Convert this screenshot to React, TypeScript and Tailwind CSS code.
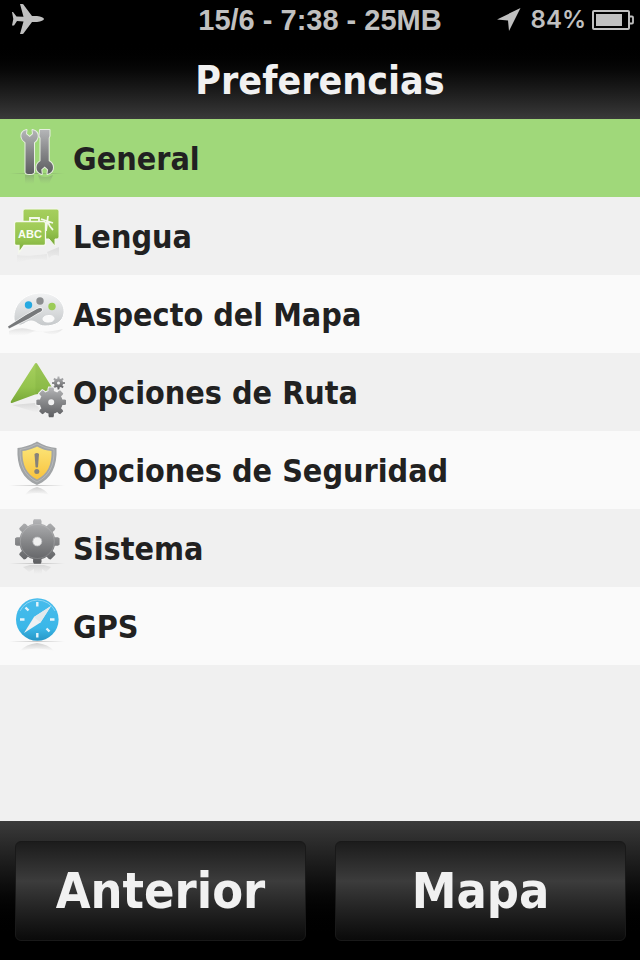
import type { ReactNode } from "react";

function gearPath(cx: number, cy: number, outer: number, inner: number, teeth: number) {
  const points: string[] = [];
  const step = (Math.PI * 2) / teeth;
  const at = (r: number, a: number) =>
    `${(cx + r * Math.cos(a)).toFixed(2)} ${(cy + r * Math.sin(a)).toFixed(2)}`;
  for (let i = 0; i < teeth; i++) {
    const a = i * step - Math.PI / 2;
    points.push(at(inner, a - step * 0.3));
    points.push(at(outer - 1.5, a - step * 0.26));
    points.push(at(outer, a - step * 0.19));
    points.push(at(outer, a + step * 0.19));
    points.push(at(outer - 1.5, a + step * 0.26));
    points.push(at(inner, a + step * 0.3));
    points.push(at(inner, a + step * 0.5));
  }
  return `M${points.join("L")}Z`;
}

function IconFrame({ children }: { children: ReactNode }) {
  return (
    <svg aria-hidden="true" viewBox="0 0 73 78" className="h-[78px] w-[73px] shrink-0">
      {children}
    </svg>
  );
}

function SharedDefs() {
  return (
    <svg aria-hidden="true" className="absolute h-0 w-0">
      <defs>
        <linearGradient id="steel" x1="0" y1="0" x2="0" y2="1">
          <stop offset="0" stopColor="#b4b5b7" />
          <stop offset="0.5" stopColor="#868789" />
          <stop offset="1" stopColor="#5d5e61" />
        </linearGradient>
        <linearGradient id="leaf" x1="0" y1="0" x2="0" y2="1">
          <stop offset="0" stopColor="#a6cf5e" />
          <stop offset="0.6" stopColor="#94c34d" />
          <stop offset="1" stopColor="#76a636" />
        </linearGradient>
        <linearGradient id="pale" x1="0" y1="0" x2="0" y2="1">
          <stop offset="0" stopColor="#f2f3f4" />
          <stop offset="1" stopColor="#c6c9cb" />
        </linearGradient>
        <linearGradient id="gold" x1="0" y1="0" x2="0" y2="1">
          <stop offset="0" stopColor="#fbe477" />
          <stop offset="1" stopColor="#f9c33d" />
        </linearGradient>
        <linearGradient id="sky" x1="0" y1="0" x2="0" y2="1">
          <stop offset="0" stopColor="#47bcec" />
          <stop offset="0.7" stopColor="#3bb7e8" />
          <stop offset="1" stopColor="#2796c6" />
        </linearGradient>
        <linearGradient id="fade" x1="0" y1="0" x2="0" y2="1">
          <stop offset="0" stopColor="#606060" stopOpacity="0.28" />
          <stop offset="1" stopColor="#808080" stopOpacity="0" />
        </linearGradient>
        <radialGradient id="ground">
          <stop offset="0" stopColor="#505050" stopOpacity="0.3" />
          <stop offset="1" stopColor="#505050" stopOpacity="0" />
        </radialGradient>
      </defs>
    </svg>
  );
}

function Ground() {
  return <ellipse cx="37" cy="54.5" rx="29" ry="0.8" fill="url(#ground)" />;
}

function ToolsIcon() {
  return (
    <IconFrame>
      <Ground />
      <path d="M25 56h9v9h-9zM38 56q7 4 15 0l-4 9h-8z" fill="url(#fade)" />
      <g fill="url(#steel)" stroke="#e6eee0" strokeWidth="2" strokeLinejoin="round" paintOrder="stroke">
        <path d="M26.500 11C22.500 12 21 15 21.500 18c.5 2.500 2 4 4 5.500V53c0 1.500 1.200 2 4.200 2S34 54.500 34 53V23.500c2-1.500 3.300-3.200 3.700-5.500.5-3-1.200-6-5.200-7l.5 4-3.300 3-3.700-3z" />
        <path d="M40 11h9.500v6l-.8 2V42c2.800 1.500 4.300 3.500 4.300 6.500s-1.800 5.500-5.500 6.500l.5-4.500-3.300-3-3.400 3 .5 4.500c-3.600-1-5.300-3.500-5.300-6.500s1.500-5 4-6.500V19l-1-2z" />
      </g>
    </IconFrame>
  );
}

function LanguageIcon() {
  return (
    <IconFrame>
      <path d="M17 58q8 2 30-1v6q-15-3-30 3zM47 55l12-5v9q-6-3-10 2z" fill="url(#fade)" opacity="0.5" />
      <path d="M25 12h32q2 0 2 2v26q0 2-2 2h-2v7l-6-7H25q-2 0-2-2V14q0-2 2-2z" fill="url(#leaf)" stroke="#f5f9ec" />
      <g fill="none" stroke="#f4f9eb" strokeWidth="1.8">
        <path d="M30 31v-10h9v10M30 26h9M41 22l12 4M48 19l-2 15M47 24q-1 6-5 7M48 25q1 4 5 8" />
      </g>
      <path d="M16.500 24.500h27q2 0 2 2v20q0 2-2 2H24l-5 7v-7h-2.500q-2 0-2-2v-20q0-2 2-2z" fill="url(#leaf)" stroke="#f5f9ec" strokeWidth="1.300" />
      <text x="30" y="41" textAnchor="middle" fill="#fafdf5" className="font-['Liberation_Sans',sans-serif] text-[11px] font-bold">
        ABC
      </text>
    </IconFrame>
  );
}

function PaletteIcon() {
  return (
    <IconFrame>
      <path d="M9 56q12-5 23-1t31-1q-8 8-17 4t-16 0-21 2z" fill="url(#fade)" opacity="0.6" />
      <path d="M14 44C13 28 26 18 41 18s24 10 23 20c-1 9-9 13-19 13-7 0-8-5-14-5-5 0-8 5-12 4-3-1-5-3-5-6zM49 40.500c-4 0-6 1.500-6 3.500s2 3 5 3c4 0 6-1.500 6-3.500s-2-3-5-3z" fill="url(#pale)" stroke="#fff" fillRule="evenodd" />
      <circle cx="28.500" cy="30" r="3.700" fill="#26a9e1" />
      <circle cx="40" cy="26" r="3.700" fill="#8c8e90" />
      <circle cx="52" cy="31.500" r="3.700" fill="#9bcb57" />
      <path d="M8 51.500 26 40l11-6q4-2 5 0t-4 4L29 43.500 9 53.500z" fill="#77797b" stroke="#f8f8f8" strokeWidth="1.400" paintOrder="stroke" />
    </IconFrame>
  );
}

function RouteIcon() {
  return (
    <IconFrame>
      <path d="M12 52l23-2 8 10-8-1z" fill="url(#fade)" opacity="0.6" />
      <path d="M35 10.500q1-1 2 0l16 25.500q0 2-2 3L35 41.500 12 50q-2 0-1-2z" fill="url(#leaf)" />
      <path d="M35.500 10.500q1-1 1.500 0l16 25.500q0 2-2 3l-15.500 2z" fill="#66952d" opacity="0.150" />
      <g fill="url(#steel)" fillRule="evenodd" stroke="#f2f2f2" strokeWidth="2" paintOrder="stroke">
        <path d={`${gearPath(58.5, 30, 6.5, 4.6, 8)}M60 30a1.500 1.500 0 1 0-3 0 1.500 1.500 0 1 0 3 0Z`} />
        <path d={`${gearPath(51.2, 49.3, 15, 11.5, 8)}M54.200 49.300a3 3 0 1 0-6 0 3 3 0 1 0 6 0Z`} />
      </g>
    </IconFrame>
  );
}

function ShieldIcon() {
  return (
    <IconFrame>
      <Ground />
      <path d="M25 64q4-6 12-8 8 2 12 8-12-4-24 0z" fill="url(#fade)" />
      <path d="M37 10.500q9 5.500 19.500 6.500c1 18-5 31-19.500 37C22.500 48 16.500 35 17.500 17 28 16 37 10.500 37 10.500z" fill="#a1a4a6" />
      <path d="M37 13q8 4.500 17 5.500c.5 16-5 26.500-17 32.500-12-6-17.500-16.500-17-32.500Q29 17.500 37 13z" fill="none" stroke="#c4c6c8" strokeWidth="1" opacity="0.600" />
      <path d="M37 15.500q7 4 14.500 4.500c.5 14-4 23-14.500 28.500C26.500 43 22 34 22.500 20 30 19.500 37 15.500 37 15.500z" fill="url(#gold)" />
      <path d="M34.500 23q2.500-2 4.500 0l-1 13q-1.200 1-2.500 0z" fill="#87827a" />
      <circle cx="36.800" cy="40.500" r="2.500" fill="#87827a" />
    </IconFrame>
  );
}

function GearIcon() {
  return (
    <IconFrame>
      <Ground />
      <path d="M23 58l7-2h14l7 2-5 5-4-3v5h-8v-5l-5 3z" fill="url(#fade)" opacity="0.6" />
      <path d={`${gearPath(37.3, 32.5, 22.5, 18, 8)}M41.800 32.500a4.500 4.500 0 1 0-9 0 4.500 4.500 0 1 0 9 0Z`} fill="url(#steel)" fillRule="evenodd" />
      <circle cx="37.300" cy="32.500" r="17" fill="none" stroke="#e5e6e7" strokeWidth="0.700" opacity="0.300" />
      <circle cx="37.300" cy="32.500" r="4.500" fill="#f0f0f0" stroke="#b4b5b7" strokeWidth="0.800" />
    </IconFrame>
  );
}

function CompassIcon() {
  return (
    <IconFrame>
      <Ground />
      <path d="M20 64q6-7 17-8 11 1 17 8-17-5-34 0z" fill="url(#fade)" />
      <circle cx="37.300" cy="32.500" r="21.300" fill="url(#sky)" />
      <path d="M20 24a19.500 19.500 0 0 1 35 0" fill="none" stroke="#8bd5f4" strokeWidth="1" />
      <path d="M37.300 15v4.500M37.300 46v4.500M20 32.500h4.500M50 32.500h4.500M25.500 20.500l3 3M46.500 41.500l3 3" stroke="#e4f4fb" strokeWidth="2.400" />
      <path d="M51 19 40.500 35.500 24 46l10-16z" fill="#eef1f3" />
      <path d="M51 19 40.500 35.500l-6.500-5.500z" fill="#e2e9ec" />
    </IconFrame>
  );
}

const items = [
  { label: "General", Icon: ToolsIcon },
  { label: "Lengua", Icon: LanguageIcon },
  { label: "Aspecto del Mapa", Icon: PaletteIcon },
  { label: "Opciones de Ruta", Icon: RouteIcon },
  { label: "Opciones de Seguridad", Icon: ShieldIcon },
  { label: "Sistema", Icon: GearIcon },
  { label: "GPS", Icon: CompassIcon },
];

function StatusBar() {
  return (
    <div className="grid h-10 grid-cols-[1fr_auto_1fr] items-center bg-black px-1.5 text-[#c0c0c0]">
      <svg aria-label="Modo avión" role="img" viewBox="0 0 32 32" className="ml-1.5 h-8 w-8" fill="currentColor">
        <path d="M8 0h2.500q1 0 2 2l7.500 10h5q6.500 1 7 3-.5 2-7 3h-5l-7.500 10q-1 2-2 2H8l3.500-12.500L5 17l-3 4.500H0L1.300 15 0 8h1l3.500 4.500 7 .3z" />
      </svg>
      <span className="font-['Liberation_Sans',Arial,sans-serif] text-[29px] leading-10 font-bold whitespace-nowrap">
        15/6 - 7:38 - 25MB
      </span>
      <div className="flex items-center justify-end gap-1.5">
        <svg aria-hidden="true" viewBox="0 0 24 24" className="mr-1 h-6 w-6" fill="currentColor">
          <path d="M23.500 0 12 23 11 12.500 0 11.500z" />
        </svg>
        <span className="font-[Inter,sans-serif] text-2xl leading-10 font-semibold">84%</span>
        <svg aria-hidden="true" viewBox="0 0 42 20" className="h-5 w-[42px]" fill="none" stroke="currentColor">
          <rect x="1" y="1" width="36" height="18" rx="1" strokeWidth="2" />
          <path d="M38 6.500h2q1 0 1 1v5q0 1-1 1h-2" strokeWidth="1.800" />
          <rect x="4" y="4" width="26" height="12" fill="currentColor" stroke="none" />
        </svg>
      </div>
    </div>
  );
}

function FooterButton({ children }: { children: ReactNode }) {
  return (
    <button
      type="button"
      className="h-[100px] flex-1 rounded-md border border-[#191919] bg-linear-to-b from-[#1c1c1c] via-[#3c3c3c] via-40% to-[#0a0a0a] text-[50px] leading-[98px] font-bold text-[#f1f1f1]"
    >
      {children}
    </button>
  );
}

export default function App() {
  return (
    <div className="flex min-h-screen flex-col bg-[#f0f0f0] font-['DejaVu_Sans_Condensed','DejaVu_Sans',sans-serif]">
      <SharedDefs />
      <StatusBar />
      <header className="flex h-[79px] items-center justify-center bg-linear-to-b from-black to-[#3a3a3a] pt-0.5">
        <h1 className="text-[39px] leading-[77px] font-bold text-[#f1f1f1]">Preferencias</h1>
      </header>
      <main className="flex-1">
        <ul>
          {items.map(({ label, Icon }, index) => (
            <li key={label} className="group">
              <button
                type="button"
                aria-current={index === 0 ? "true" : undefined}
                className="flex w-full items-center bg-[#f0f0f0] text-left text-[32px] leading-[76px] font-bold text-[#212121] group-odd:bg-[#fafafa] aria-[current=true]:bg-[#a0d87a]!"
              >
                <Icon />
                <span className="pt-0.5">{label}</span>
              </button>
            </li>
          ))}
        </ul>
      </main>
      <footer className="flex h-[139px] items-start gap-[29px] bg-linear-to-b from-[#3b3b3b] to-black to-85% pt-5 pr-3.5 pl-[15px]">
        <FooterButton>Anterior</FooterButton>
        <FooterButton>Mapa</FooterButton>
      </footer>
    </div>
  );
}
